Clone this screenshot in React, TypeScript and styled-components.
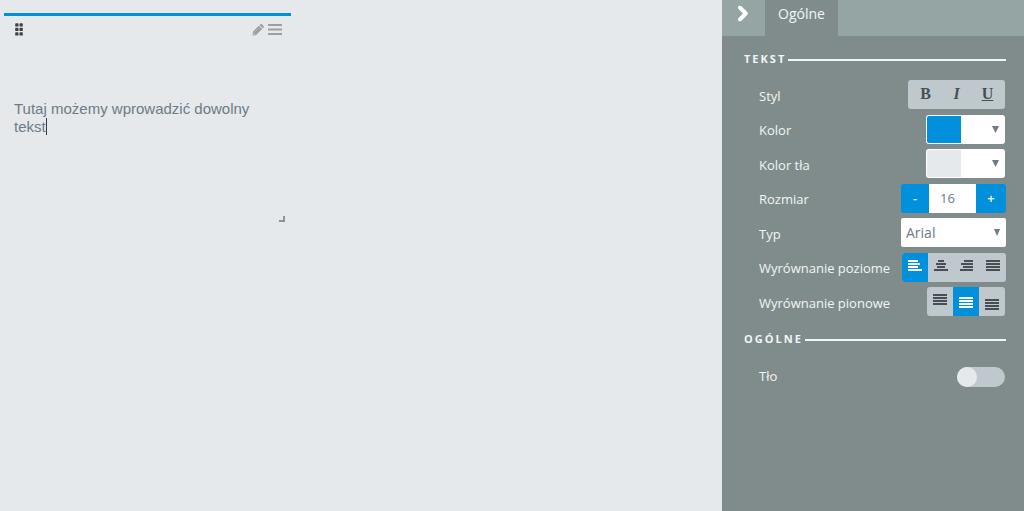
import React, { useState } from "react";
import styled, { createGlobalStyle, css } from "styled-components";

const colors = {
  canvas: "#e5e9ec",
  panel: "#7f8c8b",
  panelHeader: "#95a5a4",
  accent: "#0090dc",
  control: "#bfc9cd",
  ink: "#474f54",
  muted: "#9a9fa2",
  text: "#6d7b84",
  light: "#f2f5f6",
};

const GlobalStyle = createGlobalStyle`
  *, *::before, *::after { box-sizing: border-box; }
  body {
    margin: 0;
    background: ${colors.canvas};
    font-family: "Open Sans", sans-serif;
    font-size: 13px;
    line-height: 18px;
  }
  button, input, select, textarea { font: inherit; margin: 0; padding: 0; border: 0; }
  button { cursor: pointer; }
  svg { display: block; }
`;

const Page = styled.div`
  display: flex;
  min-height: 100vh;
`;

const Canvas = styled.main`
  flex: 1;
  min-width: 0;
  padding: 13px 4px;
`;

const Widget = styled.section`
  display: flex;
  flex-direction: column;
  width: 287px;
  border-top: 3px solid ${colors.accent};
`;

const WidgetBar = styled.header`
  display: flex;
  align-items: center;
  justify-content: space-between;
  padding: 6px 9px 6px 11px;
`;

const Tools = styled.div`
  display: flex;
  align-items: center;
  gap: 4px;
`;

const IconButton = styled.button`
  background: none;
`;

const Editor = styled.div`
  position: relative;
  margin: 58px 10px 0;
`;

const EditorText = styled.textarea`
  display: block;
  width: 100%;
  height: 104px;
  padding-right: 8px;
  resize: none;
  outline: none;
  overflow: hidden;
  background: none;
  color: ${colors.text};
  font-family: "Liberation Sans", Arial, sans-serif;
  font-size: 15px;
  line-height: 18px;
`;

const Caret = styled.span`
  position: absolute;
  left: 32px;
  top: 18px;
  width: 1px;
  height: 17px;
  background: #333b40;
`;

const ResizeGrip = styled.span`
  align-self: flex-end;
  width: 6px;
  height: 6px;
  margin: 12px 6px 0 0;
  border: solid #8d9497;
  border-width: 0 2px 2px 0;
`;

const Panel = styled.aside`
  width: 302px;
  flex: none;
  background: ${colors.panel};
  color: ${colors.light};
`;

const PanelHeader = styled.header`
  display: flex;
  height: 36px;
  background: ${colors.panelHeader};
`;

const CollapseButton = styled.button`
  display: flex;
  justify-content: center;
  width: 43px;
  padding: 5px 2px 0 0;
  background: none;
`;

const Tab = styled.button`
  padding: 0 13px 8px;
  background: ${colors.panel};
  color: ${colors.light};
  font-size: 14px;
`;

const Section = styled.section`
  padding: 13px 18px 0 22px;
`;

const SectionTitle = styled.h2`
  display: flex;
  align-items: center;
  gap: 2px;
  margin: 0;
  font-size: 11px;
  font-weight: 700;
  letter-spacing: 2px;
  line-height: 20px;

  &::after {
    content: "";
    flex: 1;
    height: 2px;
    margin-top: 2px;
    background: ${colors.light};
  }
`;

const Rows = styled.div<{ $height?: number }>`
  display: flex;
  flex-direction: column;
  justify-content: space-between;
  min-height: ${(p) => (p.$height ? `${p.$height}px` : "0")};
  margin-top: 11px;
  padding-left: 15px;
`;

const Row = styled.div`
  display: flex;
  align-items: center;
  justify-content: space-between;
  height: 29px;
`;

const RowLabel = styled.label`
  padding-top: 2px;
`;

const inset = css<{ $inset?: boolean }>`
  margin-right: ${(p) => (p.$inset ? "1px" : "0")};
`;

const ButtonGroup = styled.div<{ $inset?: boolean; $padded?: boolean }>`
  display: flex;
  height: 29px;
  padding: ${(p) => (p.$padded ? "0 2px" : "0")};
  border-radius: 3px;
  overflow: hidden;
  background: ${colors.control};
  ${inset}
`;

const GroupButton = styled.button<{ $active?: boolean; $align?: string }>`
  display: flex;
  align-items: ${(p) => p.$align ?? "center"};
  justify-content: center;
  width: 26px;
  padding: 7px 0 6px;
  background: ${(p) => (p.$active ? colors.accent : "transparent")};
  color: ${(p) => (p.$active ? "#fff" : colors.ink)};
`;

const StyleButton = styled.button<{ $kind: "bold" | "italic" | "underline" }>`
  width: 31px;
  padding-bottom: 2px;
  background: none;
  color: ${colors.ink};
  font-family: "Liberation Serif", serif;
  font-size: 16px;
  font-weight: 700;
  font-style: ${(p) => (p.$kind === "italic" ? "italic" : "normal")};
  text-decoration: ${(p) => (p.$kind === "underline" ? "underline" : "none")};
`;

const ColorPicker = styled.button`
  display: flex;
  align-items: center;
  justify-content: space-between;
  width: 79px;
  height: 29px;
  margin-right: 1px;
  padding: 1px 6px 1px 1px;
  border-radius: 3px;
  background: #fff;
  color: ${colors.text};
`;

const Swatch = styled.span<{ $color: string }>`
  width: 34px;
  height: 27px;
  border-radius: 2px 0 0 2px;
  background: ${(p) => p.$color};
`;

const Stepper = styled.div`
  display: flex;
  height: 29px;
`;

const StepButton = styled.button<{ $side: "left" | "right" }>`
  width: ${(p) => (p.$side === "left" ? "28px" : "30px")};
  padding-bottom: 1px;
  border-radius: ${(p) => (p.$side === "left" ? "3px 0 0 3px" : "0 3px 3px 0")};
  background: ${colors.accent};
  color: #fff;
  font-weight: 600;
`;

const StepInput = styled.input`
  width: 47px;
  padding-right: 10px;
  background: #fff;
  color: ${colors.text};
  text-align: center;
`;

const SelectBox = styled.div`
  position: relative;
  width: 105px;
  height: 29px;
  color: ${colors.text};

  svg {
    position: absolute;
    right: 6px;
    top: 11px;
    pointer-events: none;
  }
`;

const Select = styled.select`
  width: 100%;
  height: 100%;
  padding-left: 5px;
  appearance: none;
  border-radius: 2px;
  background: #fff;
  color: ${colors.text};
  font-size: 14px;
`;

const Toggle = styled.input`
  display: flex;
  width: 48px;
  height: 20px;
  margin: 5px 1px 0 0;
  appearance: none;
  border-radius: 10px;
  background: ${colors.control};
  cursor: pointer;

  &::before {
    content: "";
    width: 20px;
    height: 20px;
    border-radius: 50%;
    background: ${colors.canvas};
  }

  &:checked {
    justify-content: flex-end;
    background: ${colors.accent};
  }
`;

const DragIcon = () => (
  <svg width="8" height="13" viewBox="0 0 8 13" fill="#3c4245">
    {[0.3, 4.8, 9.3].map((y) =>
      [0.2, 4.5].map((x) => <rect key={`${x}-${y}`} x={x} y={y} width="3.3" height="3.3" rx="0.7" />)
    )}
  </svg>
);

const PencilIcon = () => (
  <svg width="12" height="14" viewBox="0 -2 12 14" fill={colors.muted}>
    <path d="M6.8 1.7 10.2 5.1 4.1 11.1 0.5 11.8 1 7.7zM7.5 1 8.4 0.2Q9.2 -0.4 9.9 0.3L11.5 1.9Q12.2 2.7 11.6 3.5L10.9 4.4z" />
    <path d="M1.8 8.9 3.1 10.2 1.9 10.6 1.4 10.1z" fill={colors.canvas} />
    <path d="M2.9 8.1 7.1 3.9" stroke="#c3c7ca" strokeWidth="0.6" />
  </svg>
);

const MenuIcon = () => (
  <svg width="14" height="11" viewBox="0 0 14 11" fill={colors.muted}>
    <path d="M0 0h14v2H0zM0 4.5h14v2H0zM0 9h14v2H0z" />
  </svg>
);

const ChevronIcon = () => (
  <svg width="12" height="17" viewBox="0 0 12 17" fill="none" stroke="#fff" strokeWidth="4">
    <path d="M2.5 2.2 8.8 8.5 2.5 14.8" strokeLinejoin="round" />
    <path d="M2.5 2.2 8.8 8.5 2.5 14.8" strokeWidth="3" strokeLinecap="round" />
  </svg>
);

const ArrowIcon = ({ size = 7 }: { size?: number }) => (
  <svg width={size} height="7" viewBox="0 0 7 7" preserveAspectRatio="none" fill="currentColor">
    <path d="M0 0h7L3.5 7z" />
  </svg>
);

const lines: Record<string, [number, number][]> = {
  left: [[0, 10], [0, 12], [0, 10], [0, 14]],
  center: [[4, 6], [2, 10], [3, 8], [0, 14]],
  right: [[4, 9], [1, 12], [3, 10], [0, 13]],
  full: [[0, 14], [0, 14], [0, 14], [0, 14]],
};

const LinesIcon = ({ kind }: { kind: string }) => (
  <svg width="14" height="11" viewBox="0 0 14 11" fill="currentColor">
    {lines[kind].map(([x, w], i) => (
      <rect key={i} x={x} y={i * 3} width={w} height="2" />
    ))}
  </svg>
);

const horizontal = [
  { id: "left", name: "Do lewej" },
  { id: "center", name: "Do środka" },
  { id: "right", name: "Do prawej" },
  { id: "full", name: "Wyjustuj" },
];

const vertical = [
  { id: "flex-start", name: "Do góry" },
  { id: "center", name: "Na środku" },
  { id: "flex-end", name: "Do dołu" },
];

export default function App() {
  const [text, setText] = useState("Tutaj możemy wprowadzić dowolny tekst");
  const [size, setSize] = useState(16);
  const [hAlign, setHAlign] = useState("left");
  const [vAlign, setVAlign] = useState("center");

  return (
    <>
      <GlobalStyle />
      <Page>
        <Canvas>
          <Widget>
            <WidgetBar>
              <IconButton aria-label="Przesuń"><DragIcon /></IconButton>
              <Tools>
                <IconButton aria-label="Edytuj"><PencilIcon /></IconButton>
                <IconButton aria-label="Menu"><MenuIcon /></IconButton>
              </Tools>
            </WidgetBar>
            <Editor>
              <EditorText
                aria-label="Treść"
                spellCheck={false}
                value={text}
                onChange={(e) => setText(e.target.value)}
              />
              <Caret />
            </Editor>
            <ResizeGrip />
          </Widget>
        </Canvas>

        <Panel>
          <PanelHeader>
            <CollapseButton aria-label="Zwiń"><ChevronIcon /></CollapseButton>
            <Tab>Ogólne</Tab>
          </PanelHeader>

          <Section>
            <SectionTitle>TEKST</SectionTitle>
            <Rows $height={236}>
              <Row>
                <RowLabel as="span" id="style">Styl</RowLabel>
                <ButtonGroup $inset $padded role="group" aria-labelledby="style">
                  <StyleButton $kind="bold">B</StyleButton>
                  <StyleButton $kind="italic">I</StyleButton>
                  <StyleButton $kind="underline">U</StyleButton>
                </ButtonGroup>
              </Row>
              <Row>
                <RowLabel htmlFor="color">Kolor</RowLabel>
                <ColorPicker id="color" aria-haspopup="true">
                  <Swatch $color={colors.accent} />
                  <ArrowIcon />
                </ColorPicker>
              </Row>
              <Row>
                <RowLabel htmlFor="background">Kolor tła</RowLabel>
                <ColorPicker id="background" aria-haspopup="true">
                  <Swatch $color={colors.canvas} />
                  <ArrowIcon />
                </ColorPicker>
              </Row>
              <Row>
                <RowLabel htmlFor="size">Rozmiar</RowLabel>
                <Stepper>
                  <StepButton $side="left" onClick={() => setSize(size - 1)}>-</StepButton>
                  <StepInput
                    id="size"
                    value={size}
                    onChange={(e) => setSize(Number(e.target.value) || 0)}
                  />
                  <StepButton $side="right" onClick={() => setSize(size + 1)}>+</StepButton>
                </Stepper>
              </Row>
              <Row>
                <RowLabel htmlFor="font">Typ</RowLabel>
                <SelectBox>
                  <Select id="font" defaultValue="Arial">
                    <option>Arial</option>
                  </Select>
                  <ArrowIcon size={6} />
                </SelectBox>
              </Row>
              <Row>
                <RowLabel as="span" id="h-align">Wyrównanie poziome</RowLabel>
                <ButtonGroup role="group" aria-labelledby="h-align">
                  {horizontal.map(({ id, name }) => (
                    <GroupButton
                      key={id}
                      aria-label={name}
                      aria-pressed={hAlign === id}
                      $active={hAlign === id}
                      $align="flex-start"
                      onClick={() => setHAlign(id)}
                    >
                      <LinesIcon kind={id} />
                    </GroupButton>
                  ))}
                </ButtonGroup>
              </Row>
              <Row>
                <RowLabel as="span" id="v-align">Wyrównanie pionowe</RowLabel>
                <ButtonGroup $inset role="group" aria-labelledby="v-align">
                  {vertical.map(({ id, name }) => (
                    <GroupButton
                      key={id}
                      aria-label={name}
                      aria-pressed={vAlign === id}
                      $active={vAlign === id}
                      $align={id}
                      onClick={() => setVAlign(id)}
                    >
                      <LinesIcon kind="full" />
                    </GroupButton>
                  ))}
                </ButtonGroup>
              </Row>
            </Rows>
          </Section>

          <Section>
            <SectionTitle>OGÓLNE</SectionTitle>
            <Rows>
              <Row>
                <RowLabel htmlFor="fill">Tło</RowLabel>
                <Toggle id="fill" type="checkbox" role="switch" />
              </Row>
            </Rows>
          </Section>
        </Panel>
      </Page>
    </>
  );
}
